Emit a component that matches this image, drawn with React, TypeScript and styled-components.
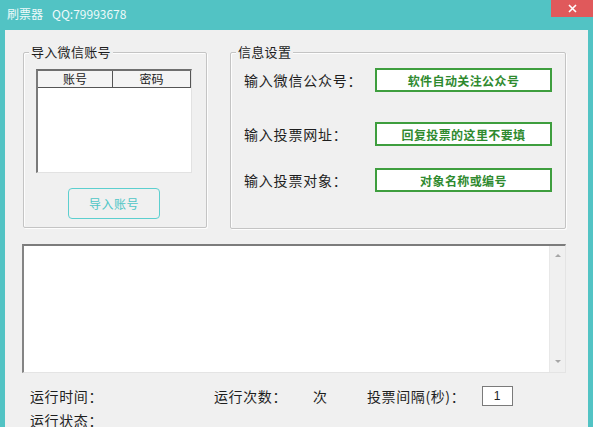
import React from 'react'
import styled, { createGlobalStyle } from 'styled-components'

const GlobalStyle = createGlobalStyle`
  html, body {
    margin: 0;
    padding: 0;
    background: #52c3c4;
    overflow: hidden;
  }
  * {
    box-sizing: border-box;
  }
`

const FONT = `"Microsoft YaHei", "Noto Sans CJK SC", "Noto Sans", sans-serif`

const Window = styled.div`
  width: 593px;
  height: 427px;
  background: #52c3c4;
  display: flex;
  flex-direction: column;
  font-family: ${FONT};
  color: #1e1e1e;
  overflow: hidden;
`

const TitleBar = styled.div`
  height: 30px;
  display: flex;
  align-items: flex-start;
  flex-shrink: 0;
`

const Title = styled.span`
  color: #eefafa;
  font-size: 12px;
  line-height: 28px;
  padding-left: 7px;
  .qq {
    margin-left: 9px;
  }
`

const CloseButton = styled.div`
  margin-left: auto;
  width: 42px;
  height: 17px;
  background: #e0595b;
  display: flex;
  align-items: center;
  justify-content: center;
`

const Body = styled.div`
  flex: 1;
  margin: 0 5px;
  background: #f0f0f0;
  padding: 22px 0 0 17px;
`

const TopRow = styled.div`
  display: flex;
  gap: 23px;
  padding-left: 1px;
`

const Group = styled.div<{ $w: number; $h: number }>`
  position: relative;
  width: ${({ $w }) => $w}px;
  height: ${({ $h }) => $h}px;
  border: 1px solid #c4c4c4;
  box-shadow: inset 1px 1px 0 #fdfdfd, 1px 1px 0 #fdfdfd;
  border-radius: 2px;
`

const Legend = styled.span`
  position: absolute;
  top: -10px;
  left: 5px;
  padding: 0 2px;
  background: #f0f0f0;
  font-size: 13px;
  line-height: 18px;
  letter-spacing: 0.3px;
  color: #1e1e1e;
`

const LeftInner = styled.div`
  display: flex;
  flex-direction: column;
  align-items: center;
  padding-top: 16px;
  padding-right: 2px;
`

const ListView = styled.div`
  width: 156px;
  height: 104px;
  background: #fff;
  border-top: 2px solid #6f6f6f;
  border-left: 2px solid #7a7a7a;
  border-right: 1px solid #e2e2e2;
  border-bottom: 1px solid #e2e2e2;
`

const ListHeader = styled.div`
  display: grid;
  grid-template-columns: 75px 1fr;
  height: 17px;
  border-bottom: 1px solid #555;
  background: #f4f4f4;
`

const HeaderCell = styled.div`
  font-size: 12px;
  line-height: 16px;
  text-align: center;
  color: #222;
  border-right: 1px solid #555;
`

const ImportButton = styled.div`
  margin-top: 15px;
  width: 92px;
  height: 31px;
  border: 1px solid #5ccfcf;
  border-radius: 4px;
  display: flex;
  align-items: center;
  justify-content: center;
  color: #4ec6c6;
  font-size: 12px;
  letter-spacing: 0.5px;
`

const InfoRows = styled.div`
  display: flex;
  flex-direction: column;
  padding-left: 13px;
`

const InfoRow = styled.div<{ $top: number }>`
  display: grid;
  grid-template-columns: 131px 177px;
  align-items: center;
  margin-top: ${({ $top }) => $top}px;
`

const InfoLabel = styled.span`
  font-size: 14px;
  letter-spacing: 0.8px;
  white-space: nowrap;
  color: #1e1e1e;
`

const GreenBox = styled.div`
  height: 24px;
  background: #fff;
  border: 2px solid #3e9e3e;
  display: flex;
  align-items: center;
  justify-content: center;
  color: #2f8a2f;
  font-size: 12px;
  font-weight: bold;
  letter-spacing: 0.4px;
`

const LogBox = styled.div`
  margin-top: 15px;
  width: 544px;
  height: 129px;
  background: #fff;
  border-top: 2px solid #7c7c7c;
  border-left: 2px solid #848484;
  border-right: 1px solid #e4e4e4;
  border-bottom: 1px solid #e4e4e4;
  display: flex;
  justify-content: flex-end;
`

const ScrollBar = styled.div`
  width: 16px;
  background: #f0f0f0;
  border-left: 1px solid #e8e8e8;
  display: flex;
  flex-direction: column;
  justify-content: space-between;
  align-items: center;
  padding: 8px 0 9px;
`

const Arrow = styled.div<{ $down?: boolean }>`
  width: 0;
  height: 0;
  border-left: 3px solid transparent;
  border-right: 3px solid transparent;
  ${({ $down }) =>
    $down ? 'border-top: 3px solid #a6a6a6;' : 'border-bottom: 3px solid #a6a6a6;'}
`

const StatRow = styled.div`
  display: grid;
  grid-template-columns: 184px 99px 54px 115px 31px;
  align-items: center;
  margin-top: 13px;
  padding-left: 8px;
  font-size: 14px;
  letter-spacing: 0.6px;
`

const StatusRow = styled.div`
  margin-top: 4px;
  padding-left: 8px;
  font-size: 14px;
  line-height: 20px;
  letter-spacing: 0.6px;
`

const Stat = styled.span`
  white-space: nowrap;
  color: #1e1e1e;
`

const IntervalInput = styled.div`
  width: 31px;
  height: 20px;
  background: #fff;
  border: 1px solid #7a7a7a;
  display: flex;
  align-items: center;
  justify-content: center;
  font-size: 12px;
  font-family: "Liberation Sans", Arial, sans-serif;
  color: #222;
`

const fields = [
  { label: '输入微信公众号：', value: '软件自动关注公众号', top: 15 },
  { label: '输入投票网址：', value: '回复投票的这里不要填', top: 30 },
  { label: '输入投票对象：', value: '对象名称或编号', top: 22 },
]

export default function App() {
  return (
    <>
      <GlobalStyle />
      <Window>
        <TitleBar>
          <Title>
            刷票器<span className="qq">QQ:79993678</span>
          </Title>
          <CloseButton>
            <svg width="9" height="9" viewBox="0 0 9 9">
              <path d="M1 1 L8 8 M8 1 L1 8" stroke="#fff" strokeWidth="1.6" />
            </svg>
          </CloseButton>
        </TitleBar>
        <Body>
          <TopRow>
            <Group $w={184} $h={176}>
              <Legend>导入微信账号</Legend>
              <LeftInner>
                <ListView>
                  <ListHeader>
                    <HeaderCell>账号</HeaderCell>
                    <HeaderCell>密码</HeaderCell>
                  </ListHeader>
                </ListView>
                <ImportButton>导入账号</ImportButton>
              </LeftInner>
            </Group>
            <Group $w={336} $h={177}>
              <Legend>信息设置</Legend>
              <InfoRows>
                {fields.map((f) => (
                  <InfoRow key={f.label} $top={f.top}>
                    <InfoLabel>{f.label}</InfoLabel>
                    <GreenBox>{f.value}</GreenBox>
                  </InfoRow>
                ))}
              </InfoRows>
            </Group>
          </TopRow>
          <LogBox>
            <ScrollBar>
              <Arrow />
              <Arrow $down />
            </ScrollBar>
          </LogBox>
          <StatRow>
            <Stat>运行时间：</Stat>
            <Stat>运行次数：</Stat>
            <Stat>次</Stat>
            <Stat>投票间隔(秒)：</Stat>
            <IntervalInput>1</IntervalInput>
          </StatRow>
          <StatusRow>运行状态：</StatusRow>
        </Body>
      </Window>
    </>
  )
}
